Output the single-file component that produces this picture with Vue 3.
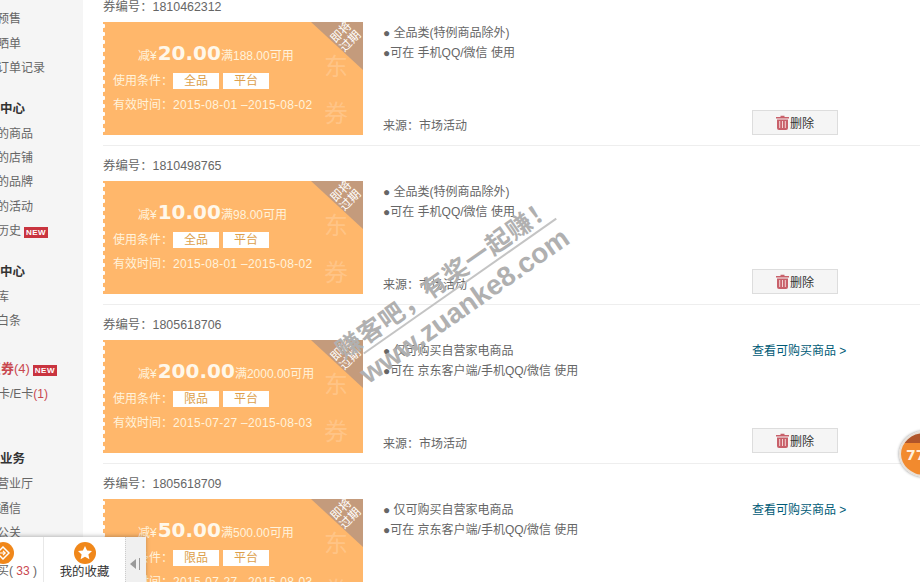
<template>
  <div class="page">
    <aside class="side">
      <template v-for="(item, i) in navItems" :key="i">
        <h3 v-if="item.head" :style="{ marginTop: item.gap + 'px' }">{{ item.text }}</h3>
        <p v-else class="nav" :class="{ hot: item.hot, card: item.count && !item.hot }" :style="{ marginTop: item.gap + 'px' }">
          <b v-if="item.hot">{{ item.text }}</b><template v-else>{{ item.text }}</template>
          <span v-if="item.count" class="count">{{ item.count }}</span>
          <i v-if="item.isNew" class="new">NEW</i>
        </p>
      </template>
    </aside>

    <main class="list">
      <section v-for="c in coupons" :key="c.no" class="row">
        <div class="no">券编号&#xFF1A;{{ c.no }}</div>
        <div class="body">
          <div class="ticket">
            <div class="corner"></div>
            <div class="soon">即将<br />过期</div>
            <div class="ghost">东<br />券</div>
            <div class="price">
              <span>减¥</span><strong>{{ c.amount }}</strong><span>满{{ c.quota }}可用</span>
            </div>
            <div class="cond">
              使用条件&#xFF1A;<em>{{ c.scope }}</em><em>平台</em>
            </div>
            <div class="date">有效时间&#xFF1A;<span>{{ c.date }}</span></div>
          </div>
          <div class="info">
            <div>
              <p>● {{ c.desc }}</p>
              <p>●可在 {{ c.client }} 使用</p>
            </div>
            <p class="source">来源&#xFF1A;市场活动</p>
          </div>
          <div class="actions">
            <a class="link">{{ c.link ? "查看可购买商品 >" : "" }}</a>
            <button type="button">
              <svg width="13" height="15" viewBox="0 0 13 15">
                <path d="M4.5 2V.8h4V2H13v1.6H0V2z" fill="#c8606a" />
                <path d="M1 4.4h11V13a2 2 0 0 1-2 2H3a2 2 0 0 1-2-2z" fill="#c8606a" />
                <path d="M3.7 6v7M6.5 6v7M9.3 6v7" stroke="#f3d5d5" stroke-width="1" />
              </svg>
              删除
            </button>
          </div>
        </div>
      </section>
    </main>

    <div class="mark">
      <div class="mark-cn">赚客吧&#xFF0C;有奖一起赚&#xFF01;</div>
      <div class="mark-line"></div>
      <div class="mark-en">www.zuanke8.com</div>
    </div>

    <div class="float-ball"><span>77</span></div>

    <div class="dock">
      <div class="dock-a">
        <span class="dot">
          <svg width="14" height="14" viewBox="0 0 14 14">
            <path d="M7 1l6 6-6 6-6-6z" fill="none" stroke="#fff" stroke-width="1.5" />
            <path d="M4 7h5M7 4.8L9.2 7 7 9.2" fill="none" stroke="#fff" stroke-width="1.2" />
          </svg>
        </span>
        <span class="dock-text">买({{ " " }}<i>33</i>{{ " " }})</span>
      </div>
      <div class="dock-b">
        <span class="dot">
          <svg width="16" height="16" viewBox="0 0 16 16">
            <path d="M8 1l2.1 4.5 4.9.6-3.6 3.3 1 4.8L8 11.8l-4.4 2.4 1-4.8L1 6.1l4.9-.6z" fill="#fff" />
          </svg>
        </span>
        <span class="dock-text">我的收藏</span>
      </div>
      <div class="dock-c">
        <svg width="12" height="12" viewBox="0 0 12 12">
          <path d="M0 6l6-5v10z" fill="#9a9a9a" />
          <path d="M9.5 0v12" stroke="#9a9a9a" stroke-width="1" />
        </svg>
      </div>
    </div>
  </div>
</template>

<script setup>
const navItems = [
  { text: "全部订单", gap: 0 },
  { text: "我的预售", gap: 0 },
  { text: "评价晒单", gap: 0 },
  { text: "历史订单记录", gap: 0 },
  { text: "关注中心", head: true, gap: 16 },
  { text: "关注的商品", gap: 1 },
  { text: "关注的店铺", gap: 0 },
  { text: "关注的品牌", gap: 0 },
  { text: "关注的活动", gap: 0 },
  { text: "浏览历史", isNew: true, gap: 0 },
  { text: "资产中心", head: true, gap: 16 },
  { text: "小金库", gap: 1 },
  { text: "京东白条", gap: 0 },
  { text: "优惠券", hot: true, count: "(4)", isNew: true, gap: 24 },
  { text: "京东卡/E卡", count: "(1)", gap: 0 },
  { text: "特色业务", head: true, gap: 41 },
  { text: "手机营业厅", gap: 1 },
  { text: "京东通信", gap: 0 },
  { text: "京东公关", gap: 0 },
];

const coupons = [
  { no: "1810462312", amount: "20.00", quota: "188.00", scope: "全品", date: "2015-08-01 –2015-08-02", desc: "全品类(特例商品除外)", client: "手机QQ/微信", link: false },
  { no: "1810498765", amount: "10.00", quota: "98.00", scope: "全品", date: "2015-08-01 –2015-08-02", desc: "全品类(特例商品除外)", client: "手机QQ/微信", link: false },
  { no: "1805618706", amount: "200.00", quota: "2000.00", scope: "限品", date: "2015-07-27 –2015-08-03", desc: "仅可购买自营家电商品", client: "京东客户端/手机QQ/微信", link: true },
  { no: "1805618709", amount: "50.00", quota: "500.00", scope: "限品", date: "2015-07-27 –2015-08-03", desc: "仅可购买自营家电商品", client: "京东客户端/手机QQ/微信", link: true },
];
</script>

<style>
html,
body {
  margin: 0;
  height: 582px;
  overflow: hidden;
  background: #fff;
}
</style>

<style scoped>
.page {
  position: relative;
  width: 920px;
  height: 582px;
  overflow: hidden;
  display: flex;
  font: 12px/20px "Liberation Sans", "Noto Sans CJK SC", sans-serif;
  color: #666;
}

.side {
  width: 83px;
  flex: none;
  height: 599px;
  margin-top: -17px;
  background: #f5f5f5;
  overflow: hidden;
}

.side h3 {
  margin: 0 0 0 -25px;
  font-size: 12.5px;
  line-height: 24px;
  font-weight: 700;
  color: #333;
  white-space: nowrap;
}

.nav {
  margin: 0 0 0 -27px;
  line-height: 24.4px;
  white-space: nowrap;
}

.nav.hot {
  margin-left: -25px;
  font-size: 13px;
}

.nav.card {
  margin-left: -26px;
}

.nav b {
  color: #c9474f;
}

.count {
  color: #c9474f;
}

.new {
  display: inline-block;
  width: 24px;
  height: 11px;
  margin-left: 3px;
  background: #c9343f;
  color: #fff;
  font: 700 8px/11px "Liberation Sans", sans-serif;
  letter-spacing: 0.5px;
  text-align: center;
}

.list {
  flex: 1;
  margin-top: -13px;
  padding-left: 20px;
}

.row {
  height: 158px;
  border-bottom: 1px solid #eee;
}

.no {
  height: 35px;
  padding-top: 10px;
  box-sizing: border-box;
  line-height: 20px;
  font-size: 12.4px;
}

.body {
  display: flex;
}

.ticket {
  position: relative;
  width: 260px;
  height: 113px;
  flex: none;
  box-sizing: border-box;
  padding: 18px 0 0 10px;
  background:
    radial-gradient(circle at 0 4px, #fff 2px, transparent 2.5px) 0 0 / 6px 8px repeat-y,
    #ffb76b;
  color: #fff3dc;
  overflow: hidden;
}

.corner {
  position: absolute;
  top: 0;
  right: 0;
  width: 0;
  height: 0;
  border-top: 48px solid #c49b7c;
  border-left: 52px solid transparent;
}

.soon {
  position: absolute;
  top: 2px;
  right: 0;
  width: 34px;
  font-size: 12px;
  line-height: 13px;
  text-align: center;
  color: #fff;
  transform: rotate(-45deg);
}

.ghost {
  position: absolute;
  top: 21px;
  right: 15px;
  font-size: 24px;
  line-height: 47px;
  color: rgba(255, 255, 255, 0.2);
}

.price {
  display: flex;
  align-items: baseline;
  height: 26px;
  padding-left: 25px;
  line-height: 26px;
  white-space: nowrap;
}

.price strong {
  margin-left: 1px;
  font: 700 20px/26px "DejaVu Sans", sans-serif;
  color: #fff8ea;
}

.cond {
  display: flex;
  align-items: center;
  height: 16px;
  margin-top: 7px;
}

.cond em {
  width: 46px;
  height: 16px;
  margin-right: 4px;
  background: #fff;
  color: #dd9f4c;
  font-style: normal;
  line-height: 16px;
  text-align: center;
}

.date {
  margin-top: 6px;
  line-height: 20px;
}

.date span {
  letter-spacing: 0.3px;
}

.info {
  width: 389px;
  flex: none;
  height: 113px;
  box-sizing: border-box;
  padding: 1px 0 0 20px;
  display: flex;
  flex-direction: column;
  justify-content: space-between;
}

.info p {
  margin: 0;
  line-height: 20px;
}

.info .source {
  margin-bottom: -1px;
}

.actions {
  width: 86px;
  height: 113px;
  padding-top: 1px;
  box-sizing: border-box;
  display: flex;
  flex-direction: column;
  justify-content: space-between;
  white-space: nowrap;
}

.link {
  height: 20px;
  line-height: 20px;
  color: #005a76;
}

button {
  display: flex;
  align-items: center;
  justify-content: center;
  gap: 1px;
  width: 86px;
  height: 25px;
  padding: 0;
  border: 1px solid #ddd;
  background: #f5f5f5;
  color: #333;
  font: 12px "Liberation Sans", "Noto Sans CJK SC", sans-serif;
}

.mark {
  position: absolute;
  left: 330px;
  top: 260px;
  width: 250px;
  color: #b0b0b0;
  text-align: center;
  transform: rotate(-35deg);
  pointer-events: none;
}

.mark-cn {
  margin: 0 -20px;
  font: 700 25px/26px "Noto Sans CJK SC", sans-serif;
  letter-spacing: 1px;
  white-space: nowrap;
}

.mark-line {
  width: 235px;
  height: 2px;
  margin: 3px 0 3px 15px;
  background: #c4c4c4;
}

.mark-en {
  margin: 0 -10px;
  font: 700 28px/30px "Liberation Sans", sans-serif;
  white-space: nowrap;
}

.float-ball {
  position: absolute;
  left: 899px;
  top: 431px;
  width: 42px;
  height: 42px;
  border: 2px solid #e8e0d8;
  border-radius: 50%;
  background: linear-gradient(#b0552a 0 25%, #f28a2e 25%);
  box-shadow: 0 0 3px #888;
  color: #fff0dc;
  font: 700 14px/44px "DejaVu Sans", sans-serif;
  padding-left: 5px;
}

.dock {
  position: absolute;
  left: 0;
  bottom: 0;
  width: 146px;
  height: 45px;
  display: flex;
  background: #fff;
  box-shadow: 0 -1px 4px rgba(0, 0, 0, 0.25);
}

.dock-a {
  width: 43px;
  flex: none;
  border-right: 1px solid #e8e8e8;
  position: relative;
  overflow: hidden;
}

.dock-a .dot {
  position: absolute;
  left: -8px;
  top: 5px;
}

.dock-a .dock-text {
  position: absolute;
  left: -3px;
  top: 24px;
  white-space: nowrap;
}

.dock-text i {
  font-style: normal;
  color: #c9474f;
}

.dock-b {
  width: 81px;
  flex: none;
  display: flex;
  flex-direction: column;
  align-items: center;
  padding-top: 5px;
  box-sizing: border-box;
  color: #333;
}

.dock-b .dock-text {
  line-height: 20px;
  margin-top: -2px;
  font-size: 12.4px;
}

.dot {
  width: 22px;
  height: 22px;
  flex: none;
  border-radius: 50%;
  background: #f0871a;
  display: flex;
  align-items: center;
  justify-content: center;
}

.dock-c {
  flex: 1;
  padding-top: 8px;
  background: #f0f0f0;
  border-left: 1px dotted #ccc;
  display: flex;
  align-items: center;
  justify-content: center;
}
</style>
